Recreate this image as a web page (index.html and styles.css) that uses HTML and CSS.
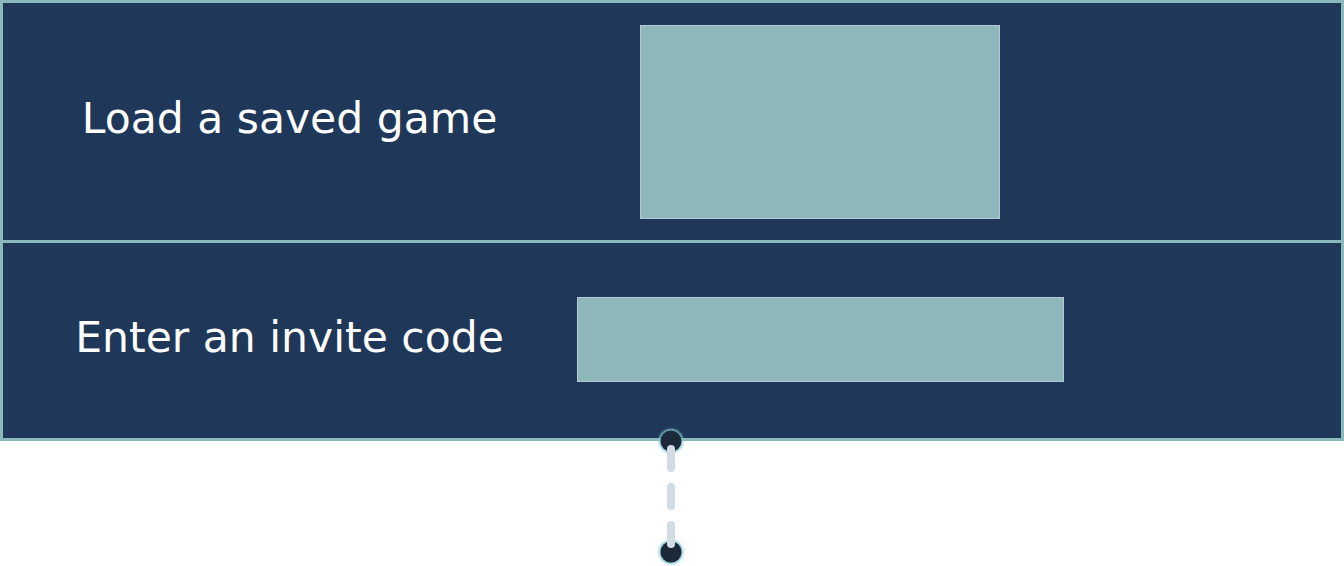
FILE: index.html
```html
<!DOCTYPE html>
<html>
<head>
  <title>Start a game</title>
  <link rel="stylesheet" href="styles.css">
</head>
<body>
  <div class="board">
    <div class="row row-load">
      <div class="label">Load a saved game</div>
      <div class="slot"><div class="box box-load"></div></div>
    </div>
    <div class="row row-invite">
      <div class="label">Enter an invite code</div>
      <div class="slot"><div class="box box-invite"></div></div>
    </div>
  </div>
  <svg class="link" width="32" height="140" viewBox="0 0 32 140">
    <defs>
      <filter id="glow" x="-50%" y="-50%" width="200%" height="200%">
        <feGaussianBlur stdDeviation="1"/>
      </filter>
    </defs>
    <circle cx="15" cy="13" r="12" fill="#7fc4cf" filter="url(#glow)"/>
    <circle cx="15" cy="13" r="10.5" fill="#1b2939"/>
    <circle cx="15" cy="124" r="12" fill="#7fc4cf" filter="url(#glow)"/>
    <circle cx="15" cy="124" r="10.5" fill="#1b2939"/>
    <line x1="15" y1="21" x2="15" y2="116" stroke="#d1dce3" stroke-width="8" stroke-linecap="round" stroke-dasharray="19 19"/>
  </svg>
</body>
</html>
```

FILE: styles.css
```css
body {
  margin: 0;
  background: #fff;
  font-family: "DejaVu Sans", sans-serif;
}
.board {
  width: 1344px;
  box-sizing: border-box;
  border: 3px solid #8cb9bb;
  background: #1f3859;
}
.row {
  display: grid;
  grid-template-columns: 573px 488px 1fr;
  align-items: center;
}
.row-load {
  height: 237px;
}
.row-invite {
  height: 195px;
  border-top: 3px solid #8cb9bb;
}
.label {
  color: #fff;
  font-size: 42.5px;
  text-align: center;
  padding-bottom: 7px;
}
.slot {
  display: flex;
  justify-content: center;
}
.box {
  box-sizing: border-box;
  background: #8db7ba;
  border: 1px solid #b4c9d2;
}
.box-load {
  width: 360px;
  height: 194px;
}
.box-invite {
  width: 487px;
  height: 85px;
  margin-top: -3px;
}
.link {
  display: block;
  margin: -13px 0 0 656px;
}
```
